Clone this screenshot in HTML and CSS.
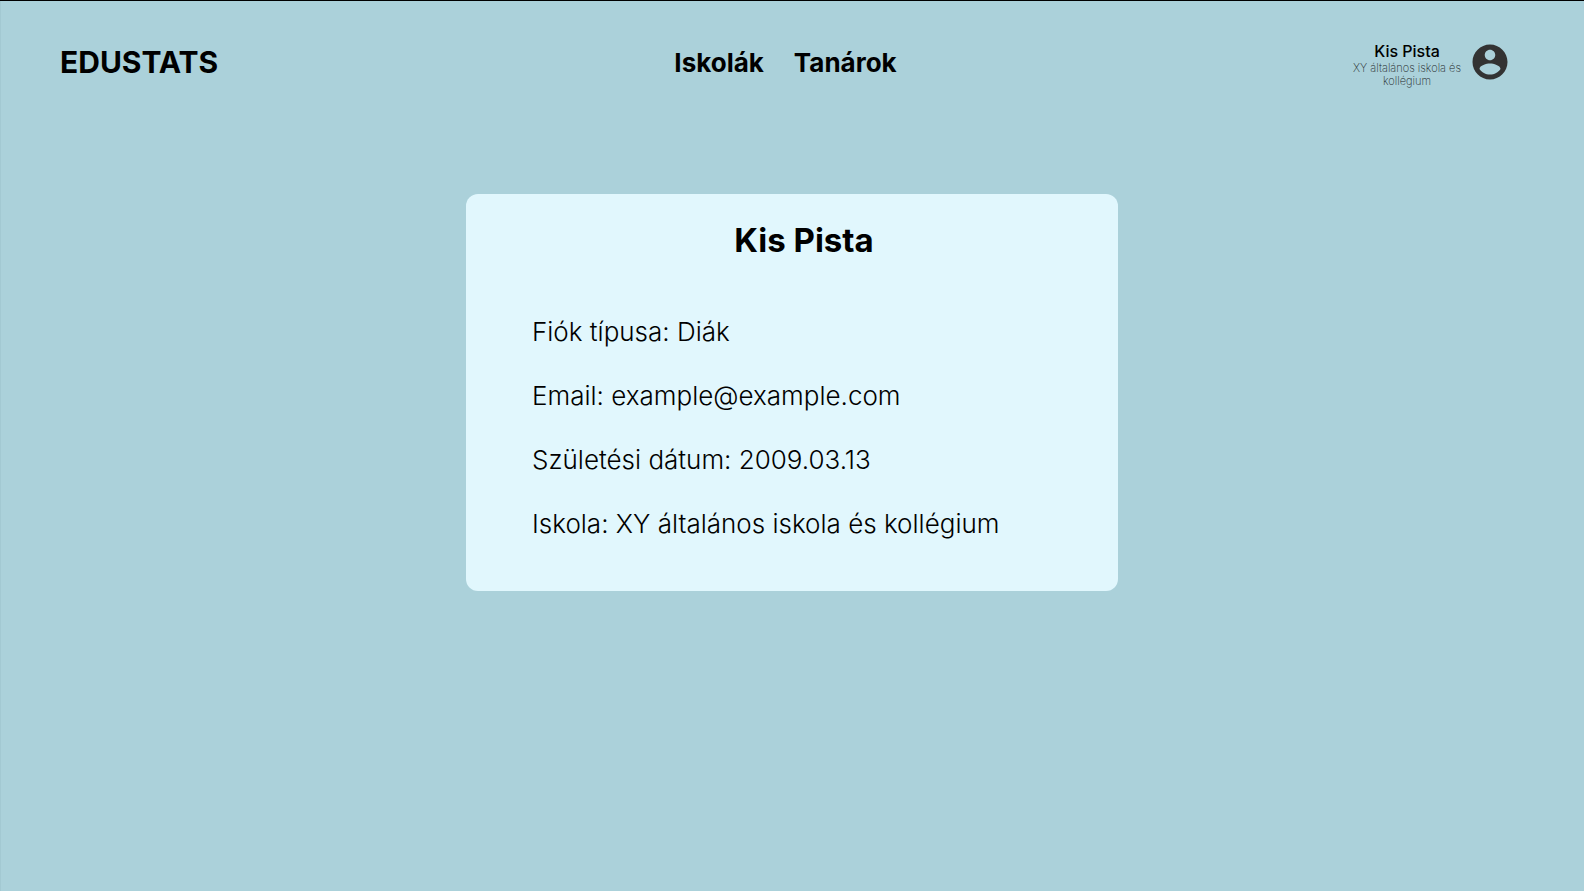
FILE: index.html
```html
<!DOCTYPE html>
<html lang="hu">
<head>
<meta charset="utf-8">
<meta name="viewport" content="width=device-width, initial-scale=1">
<title>EDUSTATS</title>
<link rel="stylesheet" href="styles.css">
</head>
<body class="page">
<header class="header">
  <div class="brand">EDUSTATS</div>
  <nav class="nav">
    <a class="nav-link" href="#">Iskolák</a>
    <a class="nav-link" href="#">Tanárok</a>
  </nav>
  <div class="user">
    <div class="user-text">
      <div class="user-name">Kis Pista</div>
      <div class="user-school">XY általános iskola és kollégium</div>
    </div>
    <svg class="user-icon" viewBox="0 0 24 24" aria-hidden="true">
      <path fill="currentColor" d="M12 2C6.480 2 2 6.480 2 12s4.480 10 10 10 10-4.480 10-10S17.520 2 12 2zm0 3c1.660 0 3 1.340 3 3s-1.340 3-3 3-3-1.340-3-3 1.340-3 3-3zm0 14.200c-2.500 0-4.710-1.280-6-3.220.03-1.990 4-3.080 6-3.080 1.990 0 5.970 1.090 6 3.080-1.290 1.940-3.500 3.220-6 3.220z"/>
    </svg>
  </div>
</header>
<main class="main">
  <section class="card">
    <h1 class="card-title">Kis Pista</h1>
    <div class="details">
      <p class="detail">Fiók típusa: Diák</p>
      <p class="detail">Email: example@example.com</p>
      <p class="detail">Születési dátum: 2009.03.13</p>
      <p class="detail">Iskola: XY általános iskola és kollégium</p>
    </div>
  </section>
</main>
</body>
</html>
```

FILE: styles.css
```css
* {
  box-sizing: border-box;
}

.page {
  margin: 0;
  min-height: 100vh;
  border-top: 1px solid #000;
  box-shadow: inset 1px 0 #a3c9d2;
  background: #abd1da;
  color: #000;
  font-family: Inter, "Liberation Sans", sans-serif;
}

.header {
  display: grid;
  grid-template-columns: 1fr auto 1fr;
  align-items: start;
  padding: 40px 73px 0 60px;
}

.brand {
  font-size: 30px;
  font-weight: 700;
  line-height: 42px;
}

.nav {
  display: flex;
  gap: 30px;
}

.nav-link {
  color: inherit;
  font-size: 26px;
  font-weight: 700;
  line-height: 44px;
  text-decoration: none;
}

.user {
  display: flex;
  justify-content: flex-end;
  align-items: flex-start;
  gap: 6px;
  height: 42px;
}

.user-text {
  width: 112px;
  text-align: center;
}

.user-name {
  font-size: 16px;
  font-weight: 500;
  line-height: 21px;
}

.user-school {
  color: #1c2628;
  font-size: 11px;
  font-weight: 200;
  line-height: 13px;
}

.user-icon {
  flex: none;
  width: 42px;
  height: 42px;
  color: #333;
}

.main {
  display: flex;
  justify-content: center;
  padding: 109px 24px 24px;
}

.card {
  width: 100%;
  max-width: 652px;
  padding: 26px 42px 35px 66px;
  border-radius: 12px;
  background: #e1f7fd;
}

.card-title {
  margin: 0 0 40px;
  font-size: 33px;
  font-weight: 700;
  line-height: 40px;
  text-align: center;
}

.detail {
  margin: 0;
  font-size: 26px;
  font-weight: 300;
  line-height: 64px;
}
```
